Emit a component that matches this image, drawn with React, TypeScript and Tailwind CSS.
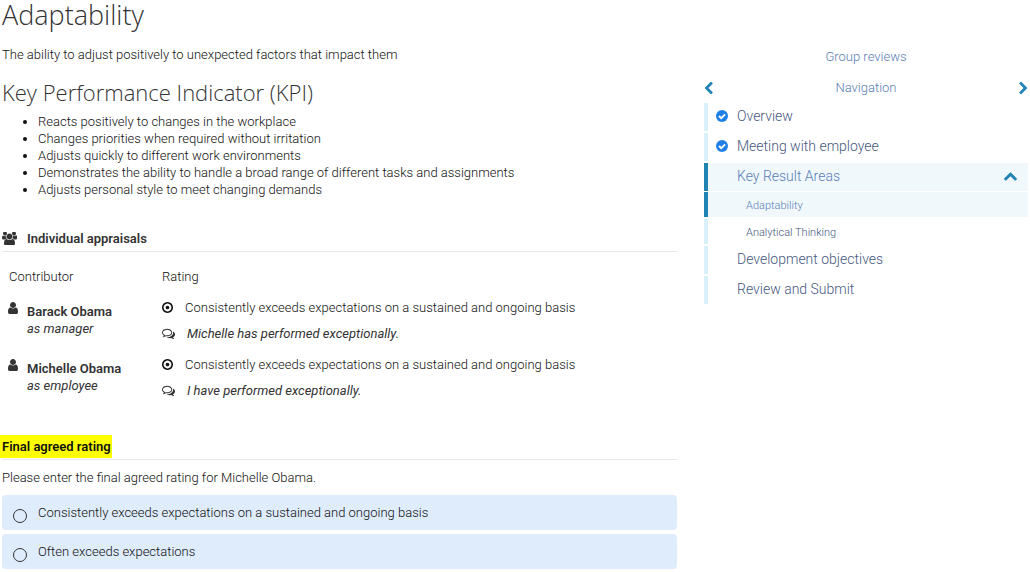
import React from 'react';

type IconProps = { className?: string };

const UserIcon = ({ className }: IconProps) => (
  <svg aria-hidden="true" viewBox="0 0 1792 1792" fill="currentColor" className={className}>
    <path d="M1536 1399q0 109-62.5 187t-150.5 78h-854q-88 0-150.5-78t-62.5-187q0-85 8.5-160.5t31.5-152 58.5-131 94-89 134.5-34.5q131 128 313 128t313-128q76 0 134.5 34.5t94 89 58.5 131 31.5 152 8.5 160.5zm-256-887q0 159-112.5 271.5t-271.5 112.5-271.5-112.5-112.5-271.5 112.5-271.5 271.5-112.5 271.5 112.5 112.5 271.5z" />
  </svg>
);

const UsersIcon = ({ className }: IconProps) => (
  <svg aria-hidden="true" viewBox="64 64 1920 1664" fill="currentColor" className={className}>
    <path d="M657 896q-162 5-265 128h-134q-82 0-138-40.5t-56-118.5q0-353 124-353 6 0 43.5 21t97.5 42.5 119 21.5q67 0 133-23-5 37-5 66 0 159 93 293zm1071 637q0 120-73 189.5t-194 69.5h-874q-121 0-194-69.5t-73-189.5q0-53 3.5-103.5t14-109 26.5-108.5 43-97.5 62-81 85.5-53.5 111.5-20q10 0 43 21.5t73 48 107 48 135 21.5 135-21.5 107-48 73-48 43-21.5q61 0 111.5 20t85.5 53.5 62 81 43 97.5 26.5 108.5 14 109 3.5 103.5zm-1024-1277q0 106-75 181t-181 75-181-75-75-181 75-181 181-75 181 75 75 181zm704 384q0 159-112.5 271.5t-271.5 112.5-271.5-112.5-112.5-271.5 112.5-271.5 271.5-112.5 271.5 112.5 112.5 271.5zm576 225q0 78-56 118.5t-138 40.5h-134q-103-123-265-128 93-134 93-293 0-29-5-66 66 23 133 23 59 0 119-21.5t97.5-42.5 43.5-21q124 0 124 353zm-128-609q0 106-75 181t-181 75-181-75-75-181 75-181 181-75 181 75 75 181z" />
  </svg>
);

const DotCircleIcon = ({ className }: IconProps) => (
  <svg aria-hidden="true" viewBox="128 128 1536 1536" fill="currentColor" className={className}>
    <path d="M1152 896q0 106-75 181t-181 75-181-75-75-181 75-181 181-75 181 75 75 181zm-256-544q-148 0-273 73t-198 198-73 273 73 273 198 198 273 73 273-73 198-198 73-273-73-273-198-198-273-73zm768 544q0 209-103 385.5t-279.5 279.5-385.5 103-385.5-103-279.5-279.5-103-385.5 103-385.5 279.5-279.5 385.5-103 385.5 103 279.5 279.5 103 385.5z" />
  </svg>
);

const CommentsIcon = ({ className }: IconProps) => (
  <svg aria-hidden="true" viewBox="0 0 1792 1792" fill="currentColor" className={className}>
    <path d="M704 384q-153 0-286 52t-211.5 141-78.5 191q0 82 53 158t149 132l97 56-35 84q34-20 62-39l44-31 53 10q78 14 153 14 153 0 286-52t211.5-141 78.5-191-78.5-191-211.5-141-286-52zm0-128q191 0 353.5 68.5t256.5 186.5 94 257-94 257-256.5 186.5-353.5 68.5q-86 0-176-16-124 88-278 128-36 9-86 16h-3q-11 0-20.5-8t-11.5-21q-1-3-1-6.5t.5-6.5 2-6l2.5-5 3.5-5.5 4-5 4.5-5 4-4.5q5-6 23-25t26-29.5 22.5-29 25-38.5 20.5-44q-124-72-195-177t-71-224q0-139 94-257t256.5-186.5 353.5-68.5zm822 1169q10 24 20.5 44t25 38.5 22.5 29 26 29.5 23 25q1 1 4 4.5t4.5 5 4 5 3.5 5.5l2.5 5 2 6 .5 6.5-1 6.5q-3 14-13 22t-22 7q-50-7-86-16-154-40-278-128-90 16-176 16-271 0-472-132 58 4 88 4 161 0 309-45t264-129q125-92 192-212t67-254q0-77-23-152 129 71 204 178t75 230q0 120-71 224.5t-195 176.5z" />
  </svg>
);

const CheckCircleIcon = ({ className }: IconProps) => (
  <svg aria-hidden="true" viewBox="0 0 12 12" className={className}>
    <circle cx="6" cy="6" r="6" fill="currentColor" />
    <path d="M3 6l2.200 2.200L9.100 4.300" fill="none" stroke="#fff" strokeWidth="1.800" />
  </svg>
);

const ChevronLeftIcon = ({ className }: IconProps) => (
  <svg aria-hidden="true" viewBox="346 64 1100 1536" fill="currentColor" className={className}>
    <path d="M1427 301l-531 531 531 531q19 19 19 45t-19 45l-166 166q-19 19-45 19t-45-19l-742-742q-19-19-19-45t19-45l742-742q19-19 45-19t45 19l166 166q19 19 19 45t-19 45z" />
  </svg>
);

const ChevronUpIcon = ({ className }: IconProps) => (
  <svg aria-hidden="true" viewBox="90 460 1612 1060" fill="currentColor" className={className}>
    <path d="M1683 1331l-166 165q-19 19-45 19t-45-19l-531-531-531 531q-19 19-45 19t-45-19l-166-165q-19-19-19-45.500t19-45.500l742-741q19-19 45-19t45 19l742 741q19 19 19 45.500t-19 45.500z" />
  </svg>
);

const indicators = [
  'Reacts positively to changes in the workplace',
  'Changes priorities when required without irritation',
  'Adjusts quickly to different work environments',
  'Demonstrates the ability to handle a broad range of different tasks and assignments',
  'Adjusts personal style to meet changing demands',
];

const appraisals = [
  {
    name: 'Barack Obama',
    role: 'as manager',
    rating: 'Consistently exceeds expectations on a sustained and ongoing basis',
    comment: 'Michelle has performed exceptionally.',
  },
  {
    name: 'Michelle Obama',
    role: 'as employee',
    rating: 'Consistently exceeds expectations on a sustained and ongoing basis',
    comment: 'I have performed exceptionally.',
  },
];

const ratings = [
  'Consistently exceeds expectations on a sustained and ongoing basis',
  'Often exceeds expectations',
];

type NavEntry = { label: string; done?: boolean; sub?: boolean; active?: boolean; open?: boolean };

const navEntries: NavEntry[] = [
  { label: 'Overview', done: true },
  { label: 'Meeting with employee', done: true },
  { label: 'Key Result Areas', active: true, open: true },
  { label: 'Adaptability', sub: true, active: true },
  { label: 'Analytical Thinking', sub: true },
  { label: 'Development objectives' },
  { label: 'Review and Submit' },
];

function NavItem({ label, done, sub, active, open }: NavEntry) {
  return (
    <li className={open ? 'mb-px' : 'mb-0.5'}>
      <a
        href="#"
        className={`flex items-center border-l-4 pr-[11px] ${
          active ? 'border-[#2182b4] bg-[#f0f8fc] text-[#5b7db5]' : 'border-[#d9eff9] text-[#46577f]'
        } ${sub ? 'h-[25px] pt-0.5 pl-[38px] text-[11px]' : 'h-7 pb-0.5 pl-2 text-sm'}`}
      >
        {!sub && (
          <span className="w-[21px] shrink-0">
            {done && <CheckCircleIcon className="size-3 text-[#2080e8]" />}
          </span>
        )}
        <span className="grow">{label}</span>
        {open && <ChevronUpIcon className="h-[9px] w-[13px] text-[#2182b4]" />}
      </a>
    </li>
  );
}

export default function App() {
  return (
    <div className="grid grid-cols-[25fr_12fr] items-start gap-x-[27px] bg-white px-0.5 font-['Roboto',sans-serif] text-[13px] leading-[17px] font-light text-[#111]">
      <main>
        <h1 className="font-['Open_Sans',sans-serif] text-[27px] leading-[29px] font-light text-[#333]">
          Adaptability
        </h1>
        <p className="mt-[17px]">The ability to adjust positively to unexpected factors that impact them</p>
        <h2 className="mt-[15px] font-['Open_Sans',sans-serif] text-[22px] leading-7 font-light text-[#333]">
          Key Performance Indicator (KPI)
        </h2>
        <ul className="mt-[7px] list-disc pl-9">
          {indicators.map((item) => (
            <li key={item}>{item}</li>
          ))}
        </ul>

        <section className="mt-8">
          <h3 className="flex items-center border-b border-[#e8e8e8] pb-1 font-semibold text-[#333]">
            <UsersIcon className="mr-2.5 h-[13px] w-[15px]" />
            Individual appraisals
          </h3>
          <table className="mt-4 w-full border-collapse text-left">
            <thead>
              <tr>
                <th className="w-[160px] pb-[14px] pl-[7px] font-light">Contributor</th>
                <th className="pb-[14px] font-light">Rating</th>
              </tr>
            </thead>
            <tbody>
              {appraisals.map((a) => (
                <tr key={a.name} className="align-top">
                  <td className="pb-[14px] pl-1">
                    <div className="flex text-[#333]">
                      <UserIcon className="mt-0.5 mr-[7px] size-[14px]" />
                      <div className="pt-1">
                        <p className="font-semibold">{a.name}</p>
                        <p className="font-normal italic">{a.role}</p>
                      </div>
                    </div>
                  </td>
                  <td className="pb-[14px]">
                    <p className="flex items-center">
                      <DotCircleIcon className="mr-3 size-[11px]" />
                      {a.rating}
                    </p>
                    <p className="mt-[9px] flex items-center font-normal text-[#333] italic">
                      <CommentsIcon className="mr-3 size-[13px]" />
                      {a.comment}
                    </p>
                  </td>
                </tr>
              ))}
            </tbody>
          </table>
        </section>

        <section className="mt-[22px]">
          <h3 id="final-rating-title" className="-ml-0.5 flex font-semibold">
            <span className="bg-[#ff0] py-[3px] pr-px pl-0.5">Final agreed rating</span>
          </h3>
          <div
            role="radiogroup"
            aria-labelledby="final-rating-title"
            className="mt-px border-t border-[#e8e8e8] pt-[9px]"
          >
            <p>Please enter the final agreed rating for Michelle Obama.</p>
            <div className="mt-[9px] flex flex-col gap-1">
              {ratings.map((label) => (
                <label key={label} className="flex h-[35px] items-center rounded-sm bg-[#dfecfc] pl-[11px]">
                  <input
                    type="radio"
                    name="final-rating"
                    className="mt-[7px] mr-[11px] size-[14px] appearance-none rounded-full border border-[#333] bg-transparent checked:bg-[#2182b4]"
                  />
                  <span>{label}</span>
                </label>
              ))}
            </div>
          </div>
        </section>
      </main>

      <aside className="pt-12">
        <p className="text-center">
          <a href="#" className="text-[#5b7db5]">Group reviews</a>
        </p>
        <div className="mt-[14px] flex items-center justify-between text-[#5b7db5]">
          <button type="button" aria-label="Previous">
            <ChevronLeftIcon className="h-3 w-[9px] text-[#2182b4]" />
          </button>
          <span>Navigation</span>
          <button type="button" aria-label="Next">
            <ChevronLeftIcon className="h-3 w-[9px] rotate-180 text-[#2182b4]" />
          </button>
        </div>
        <nav className="mt-[7px]" aria-label="Review steps">
          <ul>
            {navEntries.map((entry) => (
              <NavItem key={entry.label} {...entry} />
            ))}
          </ul>
        </nav>
      </aside>
    </div>
  );
}
